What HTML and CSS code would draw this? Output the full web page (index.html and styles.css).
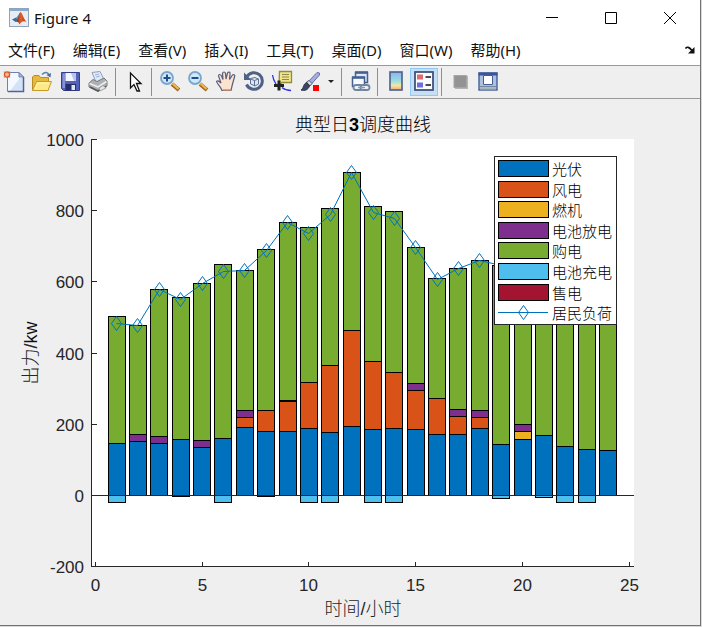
FILE: index.html
```html
<!DOCTYPE html>
<html lang="zh-CN">
<head>
<meta charset="utf-8">
<title>Figure 4</title>
<link rel="stylesheet" href="styles.css">
</head>
<body>
<main class="window">
  <header class="titlebar">
    <svg class="app-icon" viewBox="0 0 20 20" aria-hidden="true">
      <defs>
        <linearGradient id="peak" x1="0" x2="1"><stop offset="0" stop-color="#7c1f10"/><stop offset=".5" stop-color="#e0642c"/><stop offset="1" stop-color="#b02a14"/></linearGradient>
      </defs>
      <rect x=".5" y=".5" width="19" height="18" fill="#e9edf2" stroke="#8fa3bb"/>
      <rect x="1" y="1" width="18" height="2" fill="#8aa9cf"/>
      <path d="M3 11.500 7 9.500 9 12 6.500 14z" fill="#2f6fae"/>
      <path d="M7 9.500C9 9 10 5 11.500 4L10 12 8.500 13z" fill="#3b9ac4"/>
      <path d="M6.500 14C9 12.500 10 5 11.500 4 13.500 5 14.500 11 17.500 14 15 12.500 12.500 13.500 10.500 16.500 9.500 14 8.500 13.500 6.500 14z" fill="url(#peak)"/>
    </svg>
    <h1 class="title">Figure 4</h1>
    <div class="controls">
      <button class="control" aria-label="最小化"><svg viewBox="0 0 12 12"><path d="M0 5.500H12"/></svg></button>
      <button class="control" aria-label="最大化"><svg viewBox="0 0 12 12"><path d="M.5.5h11v11H.5z"/></svg></button>
      <button class="control" aria-label="关闭"><svg viewBox="0 0 12 12"><path d="M0 0 12 12M12 0 0 12"/></svg></button>
    </div>
  </header>
  <nav class="menubar">
    <button class="menu">文件(F)</button>
    <button class="menu">编辑(E)</button>
    <button class="menu">查看(V)</button>
    <button class="menu">插入(I)</button>
    <button class="menu">工具(T)</button>
    <button class="menu">桌面(D)</button>
    <button class="menu">窗口(W)</button>
    <button class="menu">帮助(H)</button>
    <button class="dock" aria-label="停靠"><svg viewBox="0 0 10 8"><path d="M.5 2.500C2 .5 4 .8 7 4.500" fill="none" stroke="#111" stroke-width="1.600"/><path d="M9.500 1V7.500H3z" fill="#111"/></svg></button>
  </nav>
  <div class="toolbar" role="toolbar">
    <button class="tool" aria-label="新建"><svg viewBox="0 0 24 24">
      <path d="M5.500 2.500H17L21.500 7V21.500H5.500z" fill="#f4f8ff" stroke="#6d83ad"/><path d="M18 8h3v13H8z" fill="#d4e2f7"/><path d="M17 2.500V7h4.500z" fill="#a9bddb" stroke="#6d83ad"/><path d="M21.500 7V21.500H6" fill="none" stroke="#4f648f" stroke-width="1.500"/>
      <path d="M2 1.500 8 7.500M8 1.500 2 7.500" stroke="#e79b72" stroke-width="1.500"/><circle cx="5" cy="4.500" r="2.600" fill="#f6b784" stroke="#d1572d" stroke-width="1.300"/></svg></button>
    <button class="tool" aria-label="打开"><svg viewBox="0 0 24 24">
      <path d="M2.500 20V7L4 5.500H9L10.500 7.500H18.500V20z" fill="#e8b93a" stroke="#b98d22"/><path d="M2.500 20.500 6.500 11.500H21.500L18 20.500z" fill="#fdea86" stroke="#c79a2a"/><path d="M5 19 8 13H19" fill="none" stroke="#fff8c4"/>
      <path d="M12 4.500C15 1.500 18 2 19 5.500" fill="none" stroke="#5e7fae" stroke-width="1.500"/><path d="M16.500 5 21 3 20.500 7.500z" fill="#4c6c9c"/></svg></button>
    <button class="tool" aria-label="保存"><svg viewBox="0 0 24 24">
      <path d="M3.500 2.500H21.500V20.500H5.500L3.500 18.500z" fill="#5361b9" stroke="#333f91"/><path d="M4.500 3.500H7V18H4.500z" fill="#8493da"/><path d="M7.500 3H18V11H7.500z" fill="#f3f6ff"/><path d="M13 3h5v8h-2z" fill="#b8c4e8"/><path d="M7.500 14H18V20.500H7.500z" fill="#262d67"/><path d="M13.500 15H17V20H13.500z" fill="#dfe5f8"/></svg></button>
    <button class="tool" aria-label="打印"><svg viewBox="0 0 24 24">
      <path d="M6 2.500 14 1.500 18 9.500 10 12z" fill="#dfeaf9" stroke="#8ca0be"/><path d="M9 5l4-1M10 7l4-1" stroke="#9bb3d4"/><path d="M3 13 7 9.500 11 11.500 18 8 21 11V16L12 21.500 3 17z" fill="#aeb0b3" stroke="#77797d"/><path d="M3.500 13.500 12 17 20.500 11.500" fill="none" stroke="#eee" stroke-width="1.500"/><path d="M4 17 12 21 20 16.500" fill="none" stroke="#55575b" stroke-width="1.500"/><path d="M13 18 17 15.500 20 18 14 21z" fill="#e5e5e5" stroke="#888" stroke-width=".7"/></svg></button>
    <span class="separator"></span>
    <button class="tool" aria-label="选择"><svg viewBox="0 0 24 24">
      <path d="M8.500 3V18L12 14.500 15 21H17.500L14.500 13.500H19z" fill="#fff" stroke="#111" stroke-width="1.300"/></svg></button>
    <span class="separator"></span>
    <button class="tool" aria-label="放大"><svg viewBox="0 0 24 24">
      <path d="M14 14 21 20" stroke="#9d6720" stroke-width="4"/><path d="M14.500 13.500 20.500 19" stroke="#efb654" stroke-width="2.200"/><circle cx="9" cy="8" r="6" fill="#cdeafa" stroke="#7ba5cb" stroke-width="1.800"/><path d="M5.500 8h7M9 4.500v7" stroke="#244c8b" stroke-width="2"/></svg></button>
    <button class="tool" aria-label="缩小"><svg viewBox="0 0 24 24">
      <path d="M14 14 21 20" stroke="#9d6720" stroke-width="4"/><path d="M14.500 13.500 20.500 19" stroke="#efb654" stroke-width="2.200"/><circle cx="9" cy="8" r="6" fill="#cdeafa" stroke="#7ba5cb" stroke-width="1.800"/><path d="M5.500 8h7" stroke="#244c8b" stroke-width="2"/></svg></button>
    <button class="tool" aria-label="平移"><svg viewBox="0 0 24 24">
      <path d="M8 20.500C7 16.500 3 14 2.500 11.500 3.500 10 5.500 11.500 7 13L4.500 6C4.500 4 6.500 4 7.500 6L9 9.500 8.500 3.500C9 1.500 11 1.500 11.500 3.500L12 9 13.500 3C14.500 1.500 16.500 2 16 4L15.500 9.500 18.500 5C20 4 21.500 5 20.500 7L18.500 14 17 20.500z" fill="#fbe3cf" stroke="#595e7b" stroke-width="1.200"/><path d="M9 20h8" stroke="#c9906b" stroke-width="1.500"/></svg></button>
    <button class="tool" aria-label="三维旋转"><svg viewBox="0 0 24 24">
      <path d="M5 6.500A8.300 8.300 0 1 1 4.500 14.500" fill="none" stroke="#4e6286" stroke-width="3"/><path d="M2 2.500V10H9.500z" fill="#4e6286"/><path d="M8.500 8.500 13 7.500 16.500 9V14L13 16 8.500 14z" fill="#dbe4f2" stroke="#5c7093"/><path d="M8.500 9 12.500 10.500 16.500 9M12.500 10.500V16" fill="none" stroke="#5c7093"/></svg></button>
    <button class="tool" aria-label="数据游标"><svg viewBox="0 0 24 24">
      <path d="M2.500 5C3 9 4 11 6 14M12 17.500C15 20 17 20.500 21 20.500" fill="none" stroke="#2a36df" stroke-width="1.300"/><path d="M9.500 1.500H21.500V12.500H12L9 15z" fill="#eee58c" stroke="#948a3c" stroke-width="1.300"/><path d="M12 4.500H19M12 7H19M12 9.500H19" stroke="#8f8848"/><path d="M9 10.500v10M4 15.500h10" stroke="#222" stroke-width="3"/></svg></button>
    <button class="tool" aria-label="刷亮"><svg viewBox="0 0 24 24">
      <path d="M10 12 19 2.500 21.500 3V5L13 14.500z" fill="#a4afdd" stroke="#6571a8"/><path d="M8.500 12 11 10.500 14 13.500 12 16z" fill="#d9dce7" stroke="#555e78"/><path d="M3 20C6 18.500 4.500 15 8.500 12.500L11.500 16C10 20 7 21 3 20z" fill="#3d4664" stroke="#252c44"/><path d="M15 15h6v6h-6z" fill="#f00"/></svg></button>
    <button class="tool tool-caret" aria-label="刷亮选项"><svg viewBox="0 0 6 4"><path d="M0 0H6L3 3z" fill="#222"/></svg></button>
    <span class="separator"></span>
    <button class="tool" aria-label="链接绘图"><svg viewBox="0 0 24 24">
      <path d="M7.500 2.500H19.500V12.500H7.500z" fill="#dce7f7" stroke="#45608f" stroke-width="1.500"/><path d="M4.500 7.500H16.500V16.500H4.500z" fill="#f6f9fe" stroke="#45608f" stroke-width="1.500"/><path d="M4 7.500h13M7 2.500h13" stroke="#45608f" stroke-width="2.500"/><rect x="5.500" y="15" width="9" height="5" rx="2.500" fill="#eef2f7" stroke="#71859e" stroke-width="1.800"/><rect x="12.500" y="15" width="9" height="5" rx="2.500" fill="#eef2f7" stroke="#71859e" stroke-width="1.800"/><path d="M10 17.500h7" stroke="#8a9bb0" stroke-width="1.500"/></svg></button>
    <span class="separator"></span>
    <button class="tool" aria-label="插入颜色栏"><svg viewBox="0 0 24 24">
      <defs><linearGradient id="ramp" x1="0" y1="0" x2="0" y2="1"><stop offset="0" stop-color="#8bb4ec"/><stop offset=".5" stop-color="#9bdde0"/><stop offset=".75" stop-color="#f3e7a0"/><stop offset="1" stop-color="#eda983"/></linearGradient></defs>
      <rect x="6" y="2" width="12" height="18" fill="url(#ramp)" stroke="#4a5f8d" stroke-width="1.600"/></svg></button>
    <button class="tool tool-active" aria-label="插入图例" aria-pressed="true"><svg viewBox="0 0 24 24">
      <rect x="3" y="2" width="18" height="18" fill="#f9fbff" stroke="#42537d" stroke-width="1.800"/><path d="M5 4.500h6v5H5z" fill="#e26b6e"/><path d="M5 12.500h6v5H5z" fill="#6b6ee0"/><path d="M13.500 7H19M13.500 15H19" stroke="#111" stroke-width="1.500"/></svg></button>
    <span class="separator"></span>
    <button class="tool" aria-label="隐藏绘图工具"><svg viewBox="0 0 24 24">
      <rect x="7" y="6" width="13" height="13" fill="#b5b5b5"/><rect x="6" y="5.500" width="12.500" height="12" fill="#939393" stroke="#a6a6a6"/></svg></button>
    <button class="tool" aria-label="显示绘图工具"><svg viewBox="0 0 24 24">
      <rect x="3" y="3" width="18" height="17" fill="#adc0de" stroke="#435f98" stroke-width="1.400"/><path d="M2.500 4h19" stroke="#3a559b" stroke-width="3"/><path d="M7.500 5.500h9v9h-9z" fill="#fff" stroke="#435f98"/><path d="M3 16.500h18" stroke="#7286a3"/><path d="M4 18.500h16" stroke="#a9b4bd" stroke-width="2"/></svg></button>
  </div>
  <svg class="figure" viewBox="0 99 700 526" role="img" aria-labelledby="chart-title">
    <rect class="plot" x="91" y="139" width="543" height="428"/>
    <text class="heading" id="chart-title" x="363" y="131">典型日<tspan class="strong">3</tspan>调度曲线</text>
    <g id="bars"></g>
    <g id="axes"></g>
    <g id="load"></g>
    <text class="heading axis-name" x="363" y="615">时间/小时</text>
    <text class="heading axis-name" transform="translate(37 353) rotate(-90)">出力/<tspan class="latin">kw</tspan></text>
    <g id="legend"></g>
  </svg>
</main>
<script src="chart.js"></script>
</body>
</html>
```
FILE: styles.css
```css
* {
  box-sizing: border-box;
}

body {
  margin: 0;
  background: #d9d9d9;
  font-family: "Noto Sans", "Noto Sans CJK SC", sans-serif;
  color: #111;
}

button {
  margin: 0;
  padding: 0;
  border: 0;
  background: none;
  font: inherit;
  color: inherit;
}

svg {
  display: block;
}

.window {
  display: flex;
  flex-direction: column;
  margin: 0 1px 1px 0;
  border: solid #737373;
  border-width: 0 1px 1px 0;
  background: #fff;
}

.titlebar {
  display: flex;
  align-items: center;
  height: 35px;
  padding: 0 1px 0 9px;
}

.app-icon {
  width: 20px;
  height: 20px;
}

.title {
  margin: 0 auto 0 5px;
  font-size: 15px;
  font-weight: 400;
}

.controls {
  display: flex;
}

.control {
  display: grid;
  place-items: center;
  width: 59px;
  height: 34px;
}

.control svg {
  width: 12px;
  height: 12px;
  fill: none;
  stroke: #000;
}

.menubar {
  display: flex;
  align-items: center;
  gap: 18px;
  height: 30px;
  padding: 0 5px 0 8px;
  font-size: 15px;
}

.menu {
  line-height: 20px;
  white-space: nowrap;
}

.dock {
  margin-left: auto;
}

.dock svg {
  width: 10px;
  height: 8px;
}

.toolbar {
  display: flex;
  align-items: center;
  height: 34px;
  border: solid #999;
  border-width: 1px 0;
  background: #efefef;
}

.tool {
  display: grid;
  place-items: center;
  width: 28px;
  height: 28px;
}

.tool svg {
  width: 24px;
  height: 24px;
}

.tool-caret {
  width: 14px;
}

.tool-caret svg {
  width: 6px;
  height: 4px;
}

.tool-active {
  border: 1px solid #90c8f6;
  background: #c5e0f5;
}

.separator {
  width: 8px;
  height: 28px;
  border-left: 3px solid #efefef;
  background: linear-gradient(to right, #8e8e8e 1px, transparent 1px);
}

.figure {
  width: 100%;
  height: auto;
  background: #efefef;
  font-family: "Liberation Sans", "Noto Sans CJK SC", sans-serif;
}

.plot {
  fill: #fff;
}

.heading {
  font-size: 18px;
  font-weight: 300;
  text-anchor: middle;
  fill: #000;
}

.axis-name {
  fill: #262626;
}

.strong {
  font-weight: 700;
}

.latin {
  font-weight: 400;
  fill: #111;
}

.tick {
  font-size: 17px;
  fill: #262626;
}

.tick-x {
  text-anchor: middle;
}

.tick-y {
  text-anchor: end;
}

.axis {
  fill: none;
  stroke: #262626;
  shape-rendering: crispEdges;
}

.bar {
  stroke: #000;
  shape-rendering: crispEdges;
}

.line,
.marker {
  fill: none;
  stroke: #0072bd;
}

.legend-box {
  fill: #fff;
  stroke: #262626;
  shape-rendering: crispEdges;
}

.legend-label {
  font-size: 15px;
  font-weight: 300;
  fill: #000;
}
```
FILE: chart.js
```js
const SVG = "http://www.w3.org/2000/svg";
const ZERO = 495.5;
const UNIT = 0.356;
const ORIGIN = 95.2;
const STEP = 21.37;
const BAR = 17;

const series = [
  ["光伏", "#0072bd"],
  ["风电", "#d95319"],
  ["燃机", "#edb120"],
  ["电池放电", "#7e2f8e"],
  ["购电", "#77ac30"],
  ["电池充电", "#4dbeee"],
  ["售电", "#a2142f"]
];

// Stack levels for each hour: solar, wind, gas, discharge, purchase, then charging below zero.
const hours = [
  [146, 146, 146, 146, 503, -20],
  [152, 152, 152, 171, 478, 0],
  [146, 146, 146, 166, 579, 0],
  [157, 157, 157, 157, 556, -3],
  [135, 135, 135, 154, 596, 0],
  [160, 160, 160, 160, 649, -20],
  [191, 219, 219, 239, 632, 0],
  [180, 239, 239, 239, 691, -3],
  [180, 264, 264, 267, 767, 0],
  [188, 317, 317, 317, 753, -20],
  [177, 365, 365, 365, 806, -20],
  [194, 463, 463, 463, 907, 0],
  [185, 376, 376, 376, 812, -20],
  [188, 346, 346, 346, 798, -20],
  [185, 295, 295, 315, 697, 0],
  [171, 272, 272, 272, 610, 0],
  [171, 222, 222, 242, 638, 0],
  [188, 219, 219, 239, 660, 0],
  [143, 143, 143, 143, 646, -8],
  [157, 157, 180, 199, 640, 0],
  [169, 169, 169, 169, 620, -6],
  [138, 138, 138, 138, 600, -20],
  [129, 129, 129, 129, 570, -20],
  [126, 126, 126, 126, 520, 0]
];

const load = [483, 478, 579, 551, 596, 629, 632, 688, 768, 735, 788, 907,
  794, 778, 697, 607, 638, 660, 645, 640, 614, 580, 550, 502];

function add(parent, name, attributes, text) {
  const node = document.createElementNS(SVG, name);
  for (const key in attributes) node.setAttribute(key, attributes[key]);
  if (text !== undefined) node.textContent = text;
  parent.appendChild(node);
  return node;
}

const yOf = value => ZERO - Math.round(value * UNIT);
const xOf = value => Math.floor(ORIGIN + value * STEP) + 0.5;
const diamond = (x, y) => `M${x} ${y - 7}L${x + 5} ${y}L${x} ${y + 7}L${x - 5} ${y}Z`;

const bars = document.getElementById("bars");
hours.forEach((levels, index) => {
  const x = Math.floor(ORIGIN + (index + 1) * STEP - BAR / 2) + 0.5;
  let base = 0;
  levels.forEach((level, part) => {
    const from = part === 5 ? 0 : base;
    if (level !== from) {
      const top = Math.min(yOf(level), yOf(from));
      const height = Math.abs(yOf(level) - yOf(from));
      add(bars, "rect", { class: "bar", x, y: top, width: BAR, height, fill: series[part][1] });
    }
    base = level;
  });
});

const axes = document.getElementById("axes");
add(axes, "path", { class: "axis", d: "M91.5 139V566.5H633.5M91.5 495.5H633.5" });
for (let value = -200; value <= 1000; value += 200) {
  const y = yOf(value);
  add(axes, "path", { class: "axis", d: `M91.5 ${y}h5` });
  add(axes, "text", { class: "tick tick-y", x: 84, y: y + 6.5 }, value);
}
for (let value = 0; value <= 25; value += 5) {
  const x = xOf(value);
  add(axes, "path", { class: "axis", d: `M${x} 566.5v-5` });
  add(axes, "text", { class: "tick tick-x", x, y: 591 }, value);
}

const group = document.getElementById("load");
const points = load.map((value, index) => [xOf(index + 1), yOf(value)]);
add(group, "path", { class: "line", d: "M" + points.map(p => p.join(" ")).join("L") });
points.forEach(([x, y]) => add(group, "path", { class: "marker", d: diamond(x, y) }));

const legend = document.getElementById("legend");
add(legend, "rect", { class: "legend-box", x: 494.5, y: 156.5, width: 122, height: 168 });
series.concat([["居民负荷", null]]).forEach(([name, color], index) => {
  const middle = Math.round(168 + index * 20.6) + 0.5;
  if (color) {
    add(legend, "rect", { class: "bar", x: 498.5, y: middle - 8, width: 50, height: 16, fill: color });
  } else {
    add(legend, "path", { class: "line", d: `M498 ${middle}H548` });
    add(legend, "path", { class: "marker", d: diamond(523.5, middle) });
  }
  add(legend, "text", { class: "legend-label", x: 552, y: middle + 6 }, name);
});
```
